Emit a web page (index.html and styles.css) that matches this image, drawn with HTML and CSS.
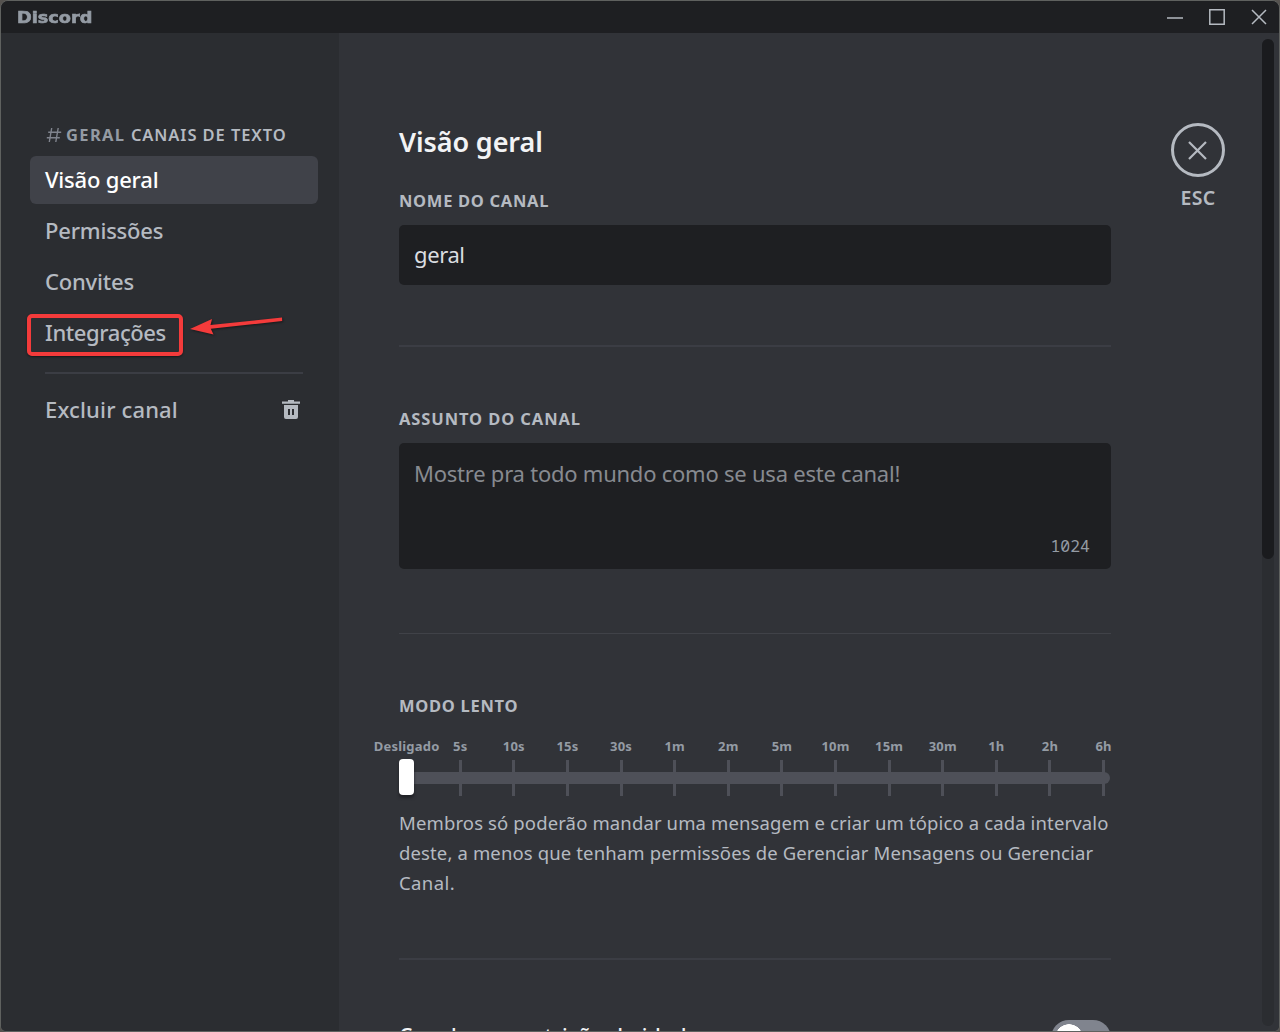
FILE: index.html
```html
<!DOCTYPE html>
<html lang="pt-BR">
<head>
<meta charset="utf-8">
<title>Discord</title>
<link rel="stylesheet" href="styles.css">
</head>
<body>
<div class="window">
  <header class="titlebar">
    <span class="wordmark">Discord</span>
    <div class="controls">
      <svg width="16" height="16" viewBox="0 0 16 16"><path d="M0 8.9h16" /></svg>
      <svg width="16" height="16" viewBox="0 0 16 16"><path d="M.8 .8h14.4v14.4H.8z" /></svg>
      <svg width="16" height="16" viewBox="0 0 16 16"><path d="M1 1l14 14M15 1L1 15" /></svg>
    </div>
  </header>
  <div class="body">
    <nav class="sidebar">
      <div class="group">
        <svg class="hash" width="16" height="16" viewBox="0 0 16 16"><path d="M5.7 1L3.3 15M12.2 1L9.8 15M2.2 5.2h13M.8 10.8h13" /></svg>
        <span class="channel">GERAL</span><span class="category">CANAIS DE TEXTO</span>
      </div>
      <a class="item selected"><span class="t-visao">Visão geral</span></a>
      <a class="item"><span class="t-perm">Permissões</span></a>
      <a class="item"><span class="t-conv">Convites</span></a>
      <a class="item"><span class="t-int">Integrações</span></a>
      <div class="separator"></div>
      <a class="item"><span class="t-exc">Excluir canal</span>
        <svg class="trash" width="18" height="21" viewBox="0 0 18 21"><path fill-rule="evenodd" d="M6 0h6v1.5h6v2.2H0V1.5h6zM2 5h14v12a2 2 0 0 1-2 2H4a2 2 0 0 1-2-2zM6 9v6h2V9zM10 9v6h2V9z" /></svg>
      </a>
      <div class="highlight"></div>
      <svg class="arrow" width="96" height="24" viewBox="0 0 96 24"><path d="M1 15L23 5 21.5 11.1 93 3.5 93.2 7.1 21.8 14.8 24.5 20.5z" /></svg>
    </nav>
    <main class="main">
      <div class="content">
        <h1>Visão geral</h1>
        <h2 class="l-nome">NOME DO CANAL</h2>
        <div class="input">geral</div>
        <hr class="rule-a">
        <h2 class="l-assunto">ASSUNTO DO CANAL</h2>
        <div class="textarea"><span class="placeholder">Mostre pra todo mundo como se usa este canal!</span><span class="count">1024</span></div>
        <hr class="rule-b">
        <h2 class="l-modo">MODO LENTO</h2>
        <div class="slider">
          <div class="marks">
            <span>Desligado</span><span>5s</span><span>10s</span><span>15s</span><span>30s</span><span>1m</span><span>2m</span><span>5m</span><span>10m</span><span>15m</span><span>30m</span><span>1h</span><span>2h</span><span>6h</span>
          </div>
          <div class="track"></div>
          <div class="thumb"></div>
        </div>
        <p class="note"><span>Membros só poderão mandar uma mensagem e criar um tópico a cada intervalo</span><span>deste, a menos que tenham permissões de Gerenciar Mensagens ou Gerenciar</span><span class="n3">Canal.</span></p>
        <hr class="rule-c">
        <div class="setting"><span class="setting-name">Canal com restrição de idade</span><span class="switch"></span></div>
      </div>
      <div class="close">
        <div class="ring"><svg width="20" height="20" viewBox="0 0 20 20"><path d="M1 2l17 17M18 2l-17 17" /></svg></div>
        <span>ESC</span>
      </div>
      <div class="scrollbar"><div class="scroll-thumb"></div></div>
    </main>
  </div>
</div>
</body>
</html>
```
FILE: styles.css
```css
* { box-sizing: border-box; }
body {
  margin: 0;
  background: #55524f;
  font-family: "Noto Sans", sans-serif;
  color: #b5bac1;
}
svg { display: block; flex: none; }
.window {
  width: 1280px;
  height: 1032px;
  border: 1px solid #5f615f;
  border-radius: 8px 8px 6px 6px;
  overflow: hidden;
  display: flex;
  flex-direction: column;
  background: #313338;
}
.titlebar {
  height: 32px;
  flex: none;
  background: #1e1f22;
  display: flex;
  justify-content: space-between;
  padding: 0 12px 0 16px;
}
.wordmark {
  font: bold 15px/34px "DejaVu Sans", sans-serif;
  color: #949ba4;
  transform: scaleX(1.18);
  transform-origin: left;
  -webkit-text-stroke: .6px #949ba4;
}
.controls { display: flex; gap: 26px; padding-top: 8px; }
.controls path { fill: none; stroke: #b5bac1; stroke-width: 1.5; }
.body { display: flex; flex: 1; min-height: 0; }
.sidebar {
  position: relative;
  width: 338px;
  flex: none;
  background: #2b2d31;
  padding: 90px 21px 0 29px;
}
.group {
  height: 24px;
  margin-bottom: 9px;
  padding-left: 16px;
  display: flex;
  align-items: center;
  font-size: 16.5px;
  line-height: 24px;
}
.hash path { fill: none; stroke: #80848e; stroke-width: 1.4; }
.channel { font-weight: 750; color: #949ba4; margin: 0 5.5px 0 4px; letter-spacing: 1.35px; }
.category { font-weight: 600; white-space: nowrap; letter-spacing: .92px; }
.item {
  height: 48px;
  margin-bottom: 3px;
  padding: 0 18px 0 15px;
  border-radius: 6px;
  display: flex;
  align-items: center;
  justify-content: space-between;
  font-size: 22px;
  font-weight: 500;
  line-height: 46px;
}
.item span { height: 48px; letter-spacing: -.2px; }
.item .t-int { letter-spacing: -.4px; }
.item .t-exc { letter-spacing: .15px; }
.selected { background: #404249; color: #fff; }
.trash path { fill: #b5bac1; }
.separator { height: 2px; margin: 15px 15.5px 12px 15px; background: #3b3d44; }
.highlight {
  position: absolute;
  left: 26px;
  top: 281px;
  width: 156px;
  height: 42px;
  border: 4px solid #f43b3b;
  border-radius: 5px;
  box-shadow: 0 1px 2px #17181a;
}
.arrow { position: absolute; left: 188px; top: 281px; filter: drop-shadow(1px 1px 1px #17181a); }
.arrow path { fill: #f43b3b; }
.main { flex: 1; display: flex; padding-left: 60px; background: #313338; overflow: hidden; }
.content { width: 712px; flex: none; padding-top: 91px; }
h1 { margin: 0; font-size: 27px; font-weight: 650; line-height: 36px; letter-spacing: -.1px; color: #f2f3f5; }
h2 { margin: 0; font-size: 16.5px; font-weight: 700; line-height: 24px; letter-spacing: .7px; white-space: nowrap; }
.l-nome { margin-top: 29px; }
.l-assunto { letter-spacing: .9px; }
.input {
  height: 60px;
  margin-top: 12px;
  padding: 0 15px;
  border-radius: 5px;
  background: #1e1f22;
  font-size: 22px;
  line-height: 58px;
  letter-spacing: -.4px;
  color: #dbdee1;
}
hr { height: 2px; border: 0; margin: 60px 0; background: #3b3d44; }
.textarea {
  height: 126px;
  margin-top: 12px;
  padding: 15px 21px 11px 15px;
  border-radius: 5px;
  background: #1e1f22;
  display: flex;
  flex-direction: column;
  justify-content: space-between;
}
.placeholder { font-size: 22px; line-height: 30px; letter-spacing: -.235px; color: #878a90; white-space: nowrap; }
.count { align-self: flex-end; font: 16.5px/24px "Noto Sans Mono", "DejaVu Sans Mono", monospace; color: #949ba4; }
.rule-b { height: 1px; margin: 64px 0 60px; background: #404248; }
.slider { position: relative; height: 60px; margin: 18px -19.4px 0 -19.2px; }
.marks { display: grid; grid-template-columns: repeat(14, minmax(0, 1fr)); }
.marks span {
  display: flex;
  flex-direction: column;
  align-items: center;
  font-size: 13px;
  font-weight: 700;
  line-height: 20px;
  letter-spacing: .2px;
  color: #949ba4;
}
.marks span::after { content: ""; width: 3px; height: 36px; margin-top: 4px; background: #4e5058; }
.track { position: absolute; left: 19px; right: 20px; top: 36px; height: 12px; border-radius: 6px; background: #4e5058; }
.thumb { position: absolute; left: 19px; top: 23px; width: 15px; height: 36px; border-radius: 4px; background: #fff; box-shadow: 0 3px 3px #202126; }
.note { margin: 12px 0 0; font-size: 18.5px; line-height: 30px; letter-spacing: .13px; }
.note span { display: block; width: max-content; white-space: nowrap; }
.note .n3 { letter-spacing: .4px; }
.setting { display: flex; justify-content: space-between; color: #f2f3f5; font-size: 21px; font-weight: 500; line-height: 33px; letter-spacing: .35px; white-space: nowrap; }
.switch { width: 60px; height: 36px; border-radius: 18px; background: radial-gradient(circle at 18px 18px, #fff 13.5px, #80848e 14px); }
.close { width: 54px; margin: 90px 0 0 60px; text-align: center; font-size: 19.5px; font-weight: 600; line-height: 30px; letter-spacing: .4px; }
.ring { width: 54px; height: 54px; margin-bottom: 6px; border: 3px solid #b5bac1; border-radius: 50%; display: grid; place-items: center; }
.ring path { fill: none; stroke: #b5bac1; stroke-width: 2.2; }
.scrollbar { width: 12px; margin: 6px 0 5px 37px; border-radius: 6px; background: #2b2d31; }
.scroll-thumb { height: 520px; border-radius: 6px; background: #1a1b1e; }
```
